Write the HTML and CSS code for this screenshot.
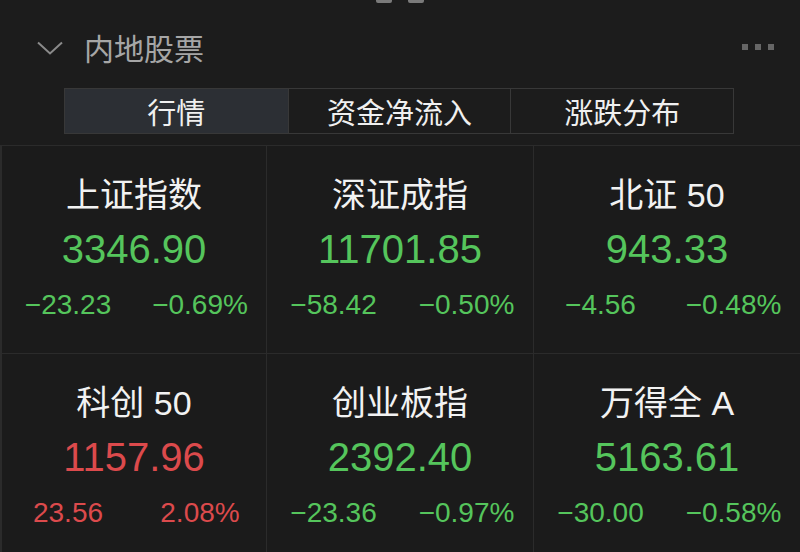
FILE: index.html
```html
<!DOCTYPE html>
<html lang="zh">
<head>
<meta charset="utf-8">
<link rel="stylesheet" href="styles.css">
</head>
<body>
<div class="page">
  <div class="pager"><span class="pill"></span><span class="pill"></span></div>
  <div class="header">
    <svg class="chevron" width="26" height="14" viewBox="0 0 26 14"><path d="M1 1.5 L13 12.5 L25 1.5" fill="none" stroke="#8a8a8a" stroke-width="2"/></svg>
    <span class="title">内地股票</span>
    <span class="more"><i></i><i></i><i></i></span>
  </div>
  <div class="tabs">
    <div class="tab active">行情</div>
    <div class="tab">资金净流入</div>
    <div class="tab">涨跌分布</div>
  </div>
  <div class="grid">
    <div class="cell"><div class="name">上证指数</div><div class="value down">3346.90</div><div class="chg down"><span>−23.23</span><span>−0.69%</span></div></div>
    <div class="cell"><div class="name">深证成指</div><div class="value down">11701.85</div><div class="chg down"><span>−58.42</span><span>−0.50%</span></div></div>
    <div class="cell"><div class="name">北证 50</div><div class="value down">943.33</div><div class="chg down"><span>−4.56</span><span>−0.48%</span></div></div>
    <div class="cell"><div class="name">科创 50</div><div class="value up">1157.96</div><div class="chg up"><span>23.56</span><span>2.08%</span></div></div>
    <div class="cell"><div class="name">创业板指</div><div class="value down">2392.40</div><div class="chg down"><span>−23.36</span><span>−0.97%</span></div></div>
    <div class="cell"><div class="name">万得全 A</div><div class="value down">5163.61</div><div class="chg down"><span>−30.00</span><span>−0.58%</span></div></div>
  </div>
</div>
</body>
</html>
```
FILE: styles.css
```css
html, body {
  margin: 0;
  padding: 0;
  background: #1c1c1c;
}
.page {
  width: 800px;
  height: 552px;
  overflow: hidden;
  font-family: "Liberation Sans", "Noto Sans CJK SC", sans-serif;
  background: #1c1c1c;
}
.pager {
  display: flex;
  justify-content: center;
  gap: 16px;
  height: 4px;
}
.pill {
  width: 16px;
  height: 3px;
  border-radius: 0 0 2px 2px;
  background: #7a7a7a;
}
.header {
  display: flex;
  align-items: center;
  height: 94px;
  margin-top: -4px;
  padding-left: 37px;
  padding-right: 26px;
}
.chevron {
  margin-right: 21px;
  margin-top: 1px;
}
.title {
  font-family: "Noto Sans CJK SC", sans-serif;
  font-size: 30px;
  color: #a6a6a6;
  flex: 1;
}
.more {
  display: flex;
  gap: 7px;
}
.more i {
  width: 6px;
  height: 6px;
  background: #666;
}
.tabs {
  display: grid;
  grid-template-columns: 1fr 1fr 1fr;
  height: 44px;
  margin: -6px 66px 0 64px;
  border: 1px solid #383838;
}
.tab {
  display: flex;
  align-items: center;
  justify-content: center;
  font-family: "Noto Sans CJK SC", sans-serif;
  font-size: 29px;
  color: #f0f0f0;
  border-left: 1px solid #383838;
}
.tab:first-child {
  border-left: none;
}
.tab.active {
  background: #2c2f34;
}
.grid {
  display: grid;
  grid-template-columns: 264px 266px 266px;
  grid-template-rows: 207px 1fr;
  gap: 1px;
  margin-top: 11px;
  padding: 1px 0 0 2px;
  background: #2b2b2b;
  height: 420px;
}
.cell {
  background: #1b1b1b;
  display: flex;
  flex-direction: column;
  align-items: stretch;
  text-align: center;
  padding-top: 29px;
}
.name {
  font-size: 34px;
  line-height: 40px;
  color: #f2f2f2;
}
.value {
  font-size: 40px;
  line-height: 48px;
  margin-top: 10px;
}
.chg {
  display: grid;
  grid-template-columns: 1fr 1fr;
  font-size: 28px;
  line-height: 32px;
  margin-top: 16px;
}
.down { color: #55c55c; }
.up { color: #dc4a4c; }
```
